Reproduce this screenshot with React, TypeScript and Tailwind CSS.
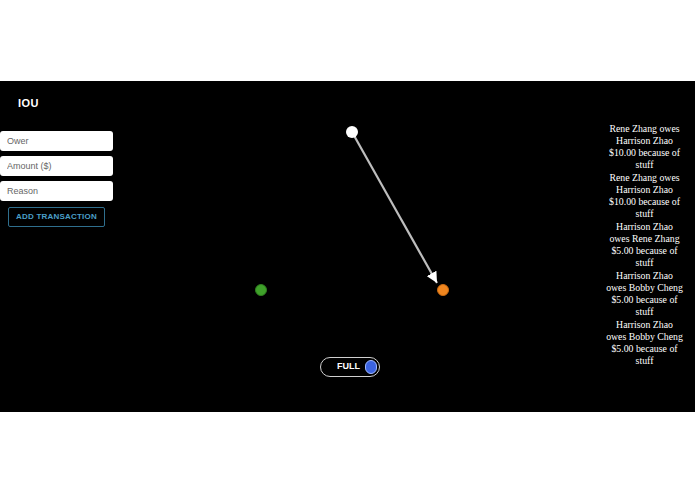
import { useState } from "react";

// each transaction is broken into the lines the narrow feed column shows
const transactions = [
  ["Rene Zhang owes", "Harrison Zhao", "$10.00 because of", "stuff"],
  ["Rene Zhang owes", "Harrison Zhao", "$10.00 because of", "stuff"],
  ["Harrison Zhao", "owes Rene Zhang", "$5.00 because of", "stuff"],
  ["Harrison Zhao", "owes Bobby Cheng", "$5.00 because of", "stuff"],
  ["Harrison Zhao", "owes Bobby Cheng", "$5.00 because of", "stuff"],
];

const sans = { fontFamily: '"Liberation Sans", Arial, sans-serif' };

export default function App() {
  const [owner, setOwner] = useState("");
  const [amount, setAmount] = useState("");
  const [reason, setReason] = useState("");

  return (
    <div className="w-[695px] h-[494px] bg-white flex flex-col overflow-hidden">
      <div className="mt-[81px] h-[331px] bg-black flex">
        {/* sidebar */}
        <div className="w-[113px] flex flex-col font-['Liberation_Sans',Arial,sans-serif]">
          <h1 className="pl-[18px] pt-[15px] text-[11px] font-bold text-white tracking-[0.5px] leading-[14px]">IOU</h1>
          <div className="mt-[21px] flex flex-col gap-[5px]">
            <input
              value={owner}
              onChange={(e) => setOwner(e.target.value)}
              placeholder="Ower"
              className="h-[20px] w-[113px] rounded-[3px] bg-white px-[7px] text-[9px] text-gray-700 placeholder:text-[#666] outline-none"
            />
            <input
              value={amount}
              onChange={(e) => setAmount(e.target.value)}
              placeholder="Amount ($)"
              className="h-[20px] w-[113px] rounded-[3px] bg-white px-[7px] text-[9px] text-gray-700 placeholder:text-[#666] outline-none"
            />
            <input
              value={reason}
              onChange={(e) => setReason(e.target.value)}
              placeholder="Reason"
              className="h-[20px] w-[113px] rounded-[3px] bg-white px-[7px] text-[9px] text-gray-700 placeholder:text-[#666] outline-none"
            />
          </div>
          <button className="ml-[8px] mt-[6px] h-[20px] w-[97px] rounded-[2px] border border-[#2f6f8e] text-[8px] font-bold tracking-[0.2px] text-[#4a9fc8]">
            ADD TRANSACTION
          </button>
        </div>

        {/* graph canvas */}
        <div className="relative flex-1">
          <svg className="absolute inset-0" width="100%" height="100%">
            <defs>
              <marker id="arrow" viewBox="0 0 10 10" refX="10" refY="5" markerWidth="5" markerHeight="5" orient="auto">
                <path d="M0 0 L10 5 L0 10 z" fill="#ffffff" />
              </marker>
            </defs>
            <line x1="239" y1="51" x2="324" y2="202" stroke="#bdbdbd" strokeWidth="2.2" markerEnd="url(#arrow)" />
            <circle cx="239" cy="51" r="6" fill="#ffffff" />
            <circle cx="330" cy="209" r="5.5" fill="#f0861f" stroke="#c96a12" strokeWidth="1" />
            <circle cx="148" cy="209" r="5.5" fill="#3fa12a" stroke="#2e7d1f" strokeWidth="1" />
          </svg>
          <div className="absolute left-[207px] top-[276px]">
            <button
              style={sans}
              className="flex h-[20px] w-[60px] items-center justify-end gap-[5px] rounded-full border-[1.5px] border-[#d0d0d0] pr-[2px] text-[9px] font-bold text-white"
            >
              FULL
              <span className="h-[14px] w-[12px] rounded-full border border-[#9fb8ff] bg-[#3b63e0]" />
            </button>
          </div>
        </div>

        {/* transaction list */}
        <div className="w-[96px] pr-[5px] pt-[44px] overflow-hidden">
          <div className="-mt-[2px] flex flex-col gap-[1px] font-['Liberation_Serif',Georgia,serif] text-[9.8px] leading-[12px] text-white text-center">
            {transactions.map((lines, i) => (
              <p key={i}>
                {lines.map((l, j) => (
                  <span key={j} className="block whitespace-nowrap">{l}</span>
                ))}
              </p>
            ))}
          </div>
        </div>
      </div>
    </div>
  );
}
